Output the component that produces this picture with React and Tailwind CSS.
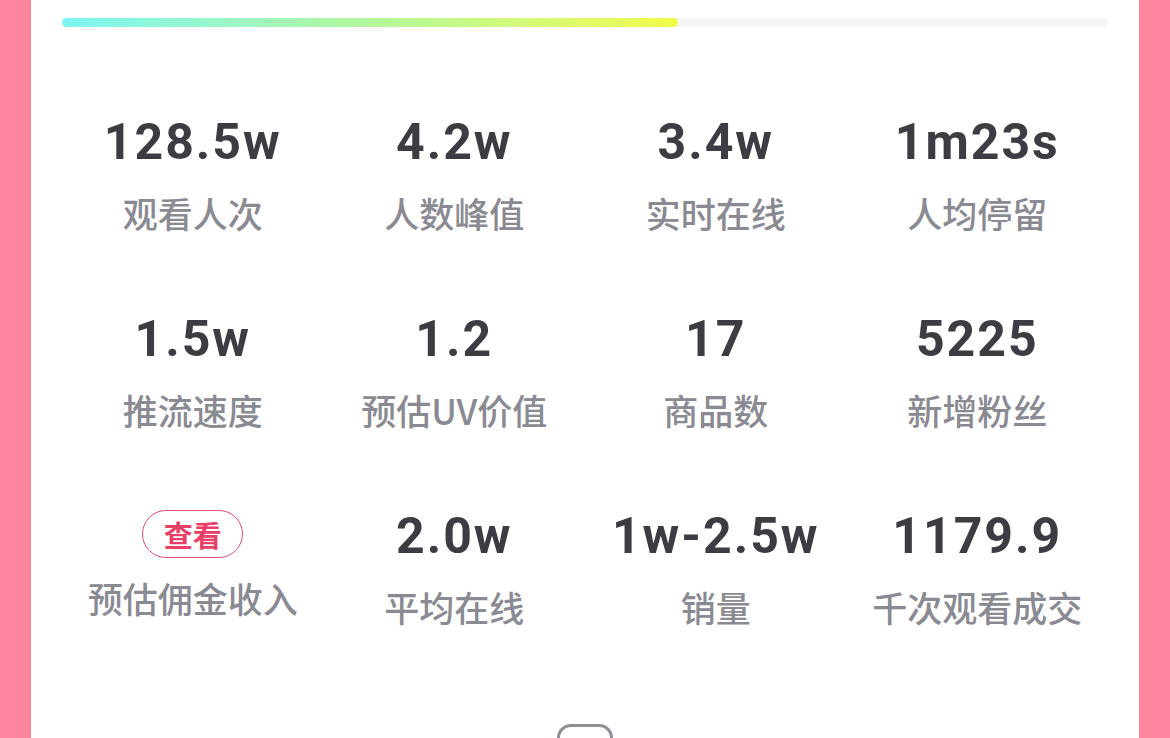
const stats = [
  { value: "128.5w", label: "观看人次" },
  { value: "4.2w", label: "人数峰值" },
  { value: "3.4w", label: "实时在线" },
  { value: "1m23s", label: "人均停留" },
  { value: "1.5w", label: "推流速度" },
  { value: "1.2", label: "预估UV价值" },
  { value: "17", label: "商品数" },
  { value: "5225", label: "新增粉丝" },
  { value: null, label: "预估佣金收入" },
  { value: "2.0w", label: "平均在线" },
  { value: "1w-2.5w", label: "销量" },
  { value: "1179.9", label: "千次观看成交" },
];

const cjk = "font-['Noto_Sans_CJK_SC','Noto_Sans',sans-serif]";

const StatCell = ({ value, label }) => {
  if (value === null) {
    // commission is hidden behind a "view" button
    return (
      <div className="flex flex-col items-center h-[197px]">
        <button
          className={`mt-[4px] h-[48px] w-[101px] rounded-full border-[1.5px] border-[#e44a72] text-[#e83e68] text-[29px] font-bold leading-none ${cjk}`}
        >
          查看
        </button>
        <div className={`mt-[18px] h-[44px] leading-[44px] text-[35px] font-medium text-[#8a8a92] ${cjk}`}>{label}</div>
      </div>
    );
  }
  return (
    <div className="flex flex-col items-center h-[197px]">
      <div className="h-[60px] leading-[60px] text-[50px] font-bold tracking-[2px] text-[#3c3c42] font-['Roboto',sans-serif]">
        {value}
      </div>
      <div className={`mt-[19px] h-[44px] leading-[44px] text-[35px] font-medium text-[#8a8a92] ${cjk}`}>{label}</div>
    </div>
  );
};

export default function App() {
  return (
    <div className="flex w-[1170px] h-[738px] overflow-hidden bg-[#fd869e]">
      <div className="w-[31px] shrink-0" />
      <div className="flex-1 bg-white px-[31px] pt-[18px]">
        {/* progress */}
        <div className="h-[9px] w-full rounded-full bg-[#f5f6f8]">
          <div className="h-full w-[616px] rounded-full bg-gradient-to-r from-[#7cf4f2] via-[#b2f79a] to-[#f2fc46]" />
        </div>
        <div className="grid grid-cols-4 pt-[85px]">
          {stats.map((s, i) => (
            <StatCell key={i} {...s} />
          ))}
        </div>
        <div className="mx-auto mt-[21px] w-[56px] h-[40px] rounded-[14px] border-[3px] border-[#8e8e96]" />
      </div>
      <div className="w-[31px] shrink-0" />
    </div>
  );
}
